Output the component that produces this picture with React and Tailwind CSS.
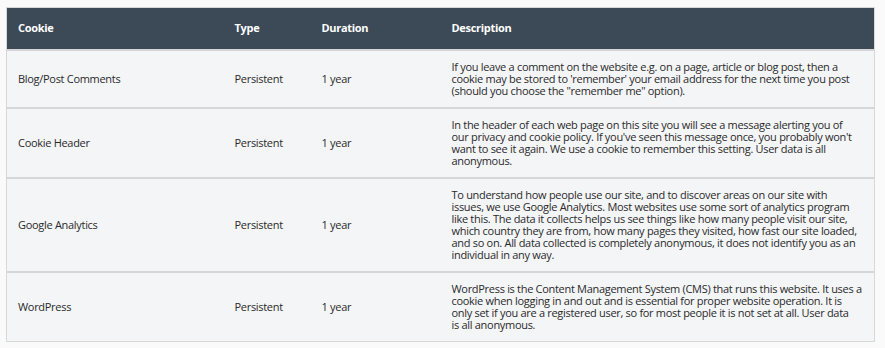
import React from "react";

const rows = [
  {
    name: "Blog/Post Comments",
    desc: [
      "If you leave a comment on the website e.g. on a page, article or blog post, then a",
      "cookie may be stored to 'remember' your email address for the next time you post",
      "(should you choose the \"remember me\" option).",
    ],
  },
  {
    name: "Cookie Header",
    desc: [
      "In the header of each web page on this site you will see a message alerting you of",
      "our privacy and cookie policy. If you've seen this message once, you probably won't",
      "want to see it again. We use a cookie to remember this setting. User data is all",
      "anonymous.",
    ],
  },
  {
    name: "Google Analytics",
    desc: [
      "To understand how people use our site, and to discover areas on our site with",
      "issues, we use Google Analytics. Most websites use some sort of analytics program",
      "like this. The data it collects helps us see things like how many people visit our site,",
      "which country they are from, how many pages they visited, how fast our site loaded,",
      "and so on. All data collected is completely anonymous, it does not identify you as an",
      "individual in any way.",
    ],
  },
  {
    name: "WordPress",
    desc: [
      "WordPress is the Content Management System (CMS) that runs this website. It uses a",
      "cookie when logging in and out and is essential for proper website operation. It is",
      "only set if you are a registered user, so for most people it is not set at all. User data",
      "is all anonymous.",
    ],
  },
];

export default function App() {
  return (
    <div className="w-[885px] h-[348px] bg-[#fafafa] pl-[6px] pt-[7px] font-['Open_Sans',sans-serif] text-[11px] leading-[12px] tracking-[-0.3px] text-[#2a2a2a]">
      <table className="w-[869px] border-collapse border border-[#d8d8d8] table-fixed">
        <colgroup>
          <col className="w-[217px]" />
          <col className="w-[87px]" />
          <col className="w-[130px]" />
          <col />
        </colgroup>
        <thead>
          <tr className="bg-[#3c4956] text-white h-[42px]">
            <th className="text-left font-bold pl-[11px] pr-[11px] align-middle">Cookie</th>
            <th className="text-left font-bold pl-[11px] pr-[11px] align-middle">Type</th>
            <th className="text-left font-bold pl-[11px] pr-[11px] align-middle">Duration</th>
            <th className="text-left font-bold pl-[11px] pr-[11px] align-middle">Description</th>
          </tr>
        </thead>
        <tbody>
          {rows.map((r) => (
            <tr key={r.name} className="bg-[#f4f5f7] border-t-[2px] border-[#d6d6d6]">
              <td className="pl-[11px] pr-[11px] align-middle">{r.name}</td>
              <td className="pl-[11px] pr-[11px] align-middle">Persistent</td>
              <td className="pl-[11px] pr-[11px] align-middle">1 year</td>
              <td className="pl-[11px] pr-[8px] py-[10px] align-middle">
                {r.desc.map((line, i) => (
                  <div key={i} className="whitespace-nowrap">{line}</div>
                ))}
              </td>
            </tr>
          ))}
        </tbody>
      </table>
    </div>
  );
}
